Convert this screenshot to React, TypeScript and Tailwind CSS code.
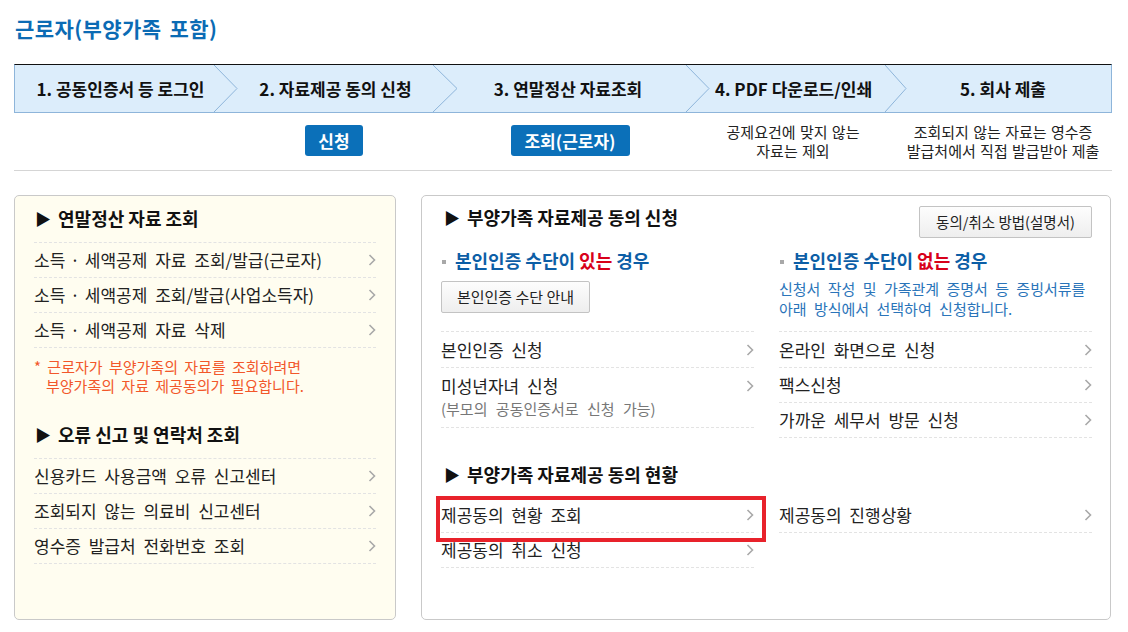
import React from "react";

const Chev = () => (
  <svg width="8" height="12" viewBox="0 0 8 12" className="shrink-0">
    <path d="M1.5 1 L6.5 6 L1.5 11" fill="none" stroke="#a9a9a9" strokeWidth="1.6" />
  </svg>
);

const StepChev = ({ w }: { w: number }) => (
  <svg width={w} height="47" viewBox={`0 0 ${w} 47`} className="shrink-0 block">
    <path d={`M0 0 L${w - 1} 23.5 L0 47`} fill="none" stroke="#8eb5da" strokeWidth="1" />
  </svg>
);

const Dot = () => <span className="mx-[5px]">·</span>;

function Row({ children, sub, h = "h-[35px]" }: { children: React.ReactNode; sub?: string; h?: string }) {
  return (
    <div className={`border-b border-dashed border-[#e3e3e3] ${sub ? "pt-[6px] pb-[7px]" : h + " flex items-center"}`}>
      <div className="flex items-center justify-between w-full">
        <span className="text-[17px] leading-[24px] text-[#222] [word-spacing:4px] whitespace-nowrap">{children}</span>
        <Chev />
      </div>
      {sub && <div className="text-[15px] leading-[22px] text-[#777] [word-spacing:5px] whitespace-nowrap">{sub}</div>}
    </div>
  );
}

function Heading({ children, className = "" }: { children: React.ReactNode; className?: string }) {
  return (
    <div className={`flex items-center h-[28px] text-[18px] font-bold text-[#111] whitespace-nowrap ${className}`}>
      <span className="text-[16px] mr-[7px] ml-[1px]">▶</span>
      {children}
    </div>
  );
}

function SubHead({ word }: { word: string }) {
  return (
    <div className="flex items-center h-[24px] text-[18px] font-bold text-[#0c5ea6] whitespace-nowrap">
      <span className="w-[4px] h-[4px] bg-[#a8a8a8] mr-[9px] ml-[1px] mt-[3px]" />
      본인인증 수단이&nbsp;<span className="text-[#d8001a]">{word}</span>&nbsp;경우
    </div>
  );
}

export default function App() {
  return (
    <div className="w-[1128px] h-[632px] bg-white font-['Noto_Sans_CJK_KR','Noto_Sans',sans-serif] overflow-hidden">
      <div className="pl-[14px] w-[1112px]">
        <div className="pt-[14px] pl-[1px] h-[42px] text-[21px] leading-[28px] font-bold text-[#0b6bb4] tracking-[0.4px] [word-spacing:3px]">
          근로자(부양가족 포함)
        </div>

        {/* steps bar */}
        <div className="mt-[22px] flex h-[49px] border-t border-t-[#111] border-b border-l border-r border-[#8eb5da] bg-[#dcedfb] text-[17px] font-bold text-[#111] whitespace-nowrap">
          <div className="w-[199px] flex items-center justify-center pl-[12px]">1. 공동인증서 등 로그인</div>
          <StepChev w={24} />
          <div className="w-[195px] flex items-center justify-center">2. 자료제공 동의 신청</div>
          <StepChev w={25} />
          <div className="w-[228px] flex items-center justify-center pr-[8px]">3. 연말정산 자료조회</div>
          <StepChev w={24} />
          <div className="w-[175px] flex items-center justify-center pr-[8px]">4. PDF 다운로드/인쇄</div>
          <StepChev w={22} />
          <div className="w-[204px] flex items-center justify-center pr-[12px]">5. 회사 제출</div>
        </div>

        {/* sub row */}
        <div className="flex h-[58px] border-b border-[#d5d5d5] items-start whitespace-nowrap">
          <div className="w-[260px] shrink-0" />
          <div className="w-[120px] shrink-0 pt-[12px] flex justify-center">
            <span className="w-[58px] h-[31px] rounded-[3px] bg-[#0b70b9] text-white text-[17px] font-bold flex items-center justify-center">신청</span>
          </div>
          <div className="w-[56px] shrink-0" />
          <div className="w-[240px] shrink-0 pt-[12px] flex justify-center">
            <span className="w-[119px] h-[31px] rounded-[3px] bg-[#0b70b9] text-white text-[17px] font-bold flex items-center justify-center">조회(근로자)</span>
          </div>
          <div className="w-[18px] shrink-0" />
          <div className="w-[170px] shrink-0 pt-[9px] text-center text-[15px] leading-[19px] text-[#222] [word-spacing:1px]">
            공제요건에 맞지 않는
            <br />
            자료는 제외
          </div>
          <div className="w-[17px] shrink-0" />
          <div className="w-[216px] shrink-0 pt-[9px] text-center text-[15px] leading-[19px] text-[#222] [word-spacing:1px]">
            조회되지 않는 자료는 영수증
            <br />
            발급처에서 직접 발급받아 제출
          </div>
        </div>

        {/* panels */}
        <div className="mt-[24px] flex gap-[25px] h-[425px]">
          {/* left */}
          <div className="w-[382px] border border-[#c9c9c9] rounded-[5px] bg-[#fffdf0] px-[19px] pt-[8px]">
            <Heading>연말정산 자료 조회</Heading>
            <div className="mt-[10px] border-t border-dashed border-[#e3e3e3]">
              <Row>소득<Dot />세액공제 자료 조회/발급(근로자)</Row>
              <Row>소득<Dot />세액공제 조회/발급(사업소득자)</Row>
              <Row>소득<Dot />세액공제 자료 삭제</Row>
            </div>
            <div className="mt-[9px] text-[15px] leading-[19px] text-[#f2572a] [word-spacing:3px] whitespace-nowrap">
              * 근로자가 부양가족의 자료를 조회하려면
              <br />
              <span className="pl-[12px]">부양가족의 자료 제공동의가 필요합니다.</span>
            </div>
            <Heading className="mt-[25px]">오류 신고 및 연락처 조회</Heading>
            <div className="mt-[10px] border-t border-dashed border-[#e3e3e3]">
              <Row>신용카드 사용금액 오류 신고센터</Row>
              <Row>조회되지 않는 의료비 신고센터</Row>
              <Row>영수증 발급처 전화번호 조회</Row>
            </div>
          </div>

          {/* right */}
          <div className="w-[690px] border border-[#c9c9c9] rounded-[5px] bg-white pl-[19px] pr-[18px] pt-[10px]">
            <div className="flex items-start justify-between">
              <Heading className="-mt-[3px] ml-[2px]">부양가족 자료제공 동의 신청</Heading>
              <div className="w-[173px] h-[32px] border border-[#c3c3c3] rounded-[2px] bg-gradient-to-b from-[#fdfdfd] to-[#eeeeee] text-[14.5px] text-[#222] flex items-center justify-center whitespace-nowrap">
                동의/취소 방법(설명서)
              </div>
            </div>
            <div className="flex gap-[25px] items-start">
              <div className="w-[313px]">
                <div className="mt-[10px]">
                  <SubHead word="있는" />
                </div>
                <div className="mt-[9px] w-[149px] h-[32px] border border-[#c3c3c3] rounded-[2px] bg-gradient-to-b from-[#fdfdfd] to-[#eeeeee] text-[15px] text-[#222] flex items-center justify-center whitespace-nowrap">
                  본인인증 수단 안내
                </div>
                <div className="mt-[18px] border-t border-dashed border-[#e3e3e3]">
                  <Row h="h-[36px]">본인인증 신청</Row>
                  <Row sub="(부모의 공동인증서로 신청 가능)">미성년자녀 신청</Row>
                </div>
              </div>
              <div className="w-[313px]">
                <div className="mt-[10px]">
                  <SubHead word="없는" />
                </div>
                <div className="mt-[7px] text-[15px] leading-[20px] text-[#2a74b9] [word-spacing:4px] whitespace-nowrap">
                  신청서 작성 및 가족관계 증명서 등 증빙서류를
                  <br />
                  아래 방식에서 선택하여 신청합니다.
                </div>
                <div className="mt-[12px] border-t border-dashed border-[#e3e3e3]">
                  <Row h="h-[36px]">온라인 화면으로 신청</Row>
                  <Row>팩스신청</Row>
                  <Row>가까운 세무서 방문 신청</Row>
                </div>
              </div>
            </div>

            <Heading className="mt-[22px] ml-[2px]">부양가족 자료제공 동의 현황</Heading>
            <div className="mt-[10px] flex gap-[25px] items-start">
              <div className="w-[313px] relative">
                <Row>제공동의 현황 조회</Row>
                <Row>제공동의 취소 신청</Row>
                <div className="absolute left-[-5px] top-[-2px] w-[330px] h-[46px] border-[4px] border-[#e8222b]" />
              </div>
              <div className="w-[313px]">
                <Row>제공동의 진행상황</Row>
              </div>
            </div>
          </div>
        </div>
      </div>
    </div>
  );
}
